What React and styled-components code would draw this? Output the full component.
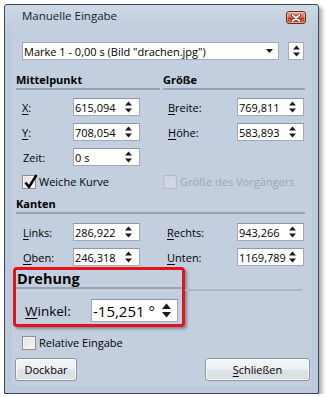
import React from "react";
import styled, { createGlobalStyle } from "styled-components";

const COLORS = {
  page: "#ffffff",
  border: "#3a4859",
  frame: "#bccadb",
  titleTop: "#cfd9e6",
  client: "#c3cfde",
  rule: "#98a3b1",
  ruleFaint: "#adb7c4",
  fieldBorder: "#a2aab5",
  text: "#000000",
  disabled: "#9ba6b3",
  red: "#e3131b",
};

const FONT = `"Segoe UI", "Open Sans", "Noto Sans", sans-serif`;

const GlobalStyle = createGlobalStyle`
  html, body {
    margin: 0;
    padding: 0;
    background: ${COLORS.page};
  }
  body {
    font-family: ${FONT};
    font-size: 11px;
    color: ${COLORS.text};
  }
  * { box-sizing: border-box; }
`;

const Window = styled.div`
  margin: 4px 0 0 4px;
  width: 315px;
  height: 390px;
  border: 1px solid ${COLORS.border};
  border-radius: 3px 3px 0 0;
  background: linear-gradient(${COLORS.titleTop} 0px, ${COLORS.frame} 28px, ${COLORS.frame} 100%);
  box-shadow: 3px 3px 4px rgba(0, 0, 0, 0.35);
  display: flex;
  flex-direction: column;
`;

const TitleBar = styled.div`
  height: 23px;
  display: flex;
  justify-content: space-between;
  align-items: flex-start;
  padding: 0 12px 0 17px;
`;

const Title = styled.span`
  font-size: 11.5px;
  line-height: 21px;
  color: #0f1e33;
`;

const CloseBox = styled.div`
  margin-top: 6px;
  width: 20px;
  height: 13px;
  border: 1px solid #6a2c24;
  border-radius: 3px;
  background: linear-gradient(#e9a596 0%, #d9715e 45%, #c2412d 55%, #d5664e 100%);
  box-shadow: inset 0 0 0 1px rgba(255, 255, 255, 0.35);
  display: flex;
  align-items: center;
  justify-content: center;
`;

const Frame = styled.div`
  flex: 1;
  padding: 0 6px 7px 7px;
  display: flex;
`;

const Client = styled.div`
  width: 300px;
  height: 358px;
  background: ${COLORS.client};
  padding: 14px 7px 5px 4px;
  display: flex;
  flex-direction: column;
`;

const TopRow = styled.div`
  display: flex;
  gap: 9px;
  margin-left: 6px;
  margin-right: -6px;
`;

const Combo = styled.div`
  width: 257px;
  height: 18px;
  background: #fff;
  border: 1px solid ${COLORS.fieldBorder};
  display: flex;
  align-items: center;
  justify-content: space-between;
  padding: 0 5px 0 1px;
  font-size: 11px;
  white-space: nowrap;
`;

const SpinBox = styled.div`
  width: 16px;
  height: 18px;
  background: #fff;
  border: 1px solid ${COLORS.fieldBorder};
  display: flex;
  align-items: center;
  justify-content: center;
`;

const TwoCol = styled.div`
  margin-top: 12px;
  display: grid;
  grid-template-columns: 144px 142px;
  column-gap: 3px;
  row-gap: 7px;
  align-items: center;
`;

const Header = styled.div`
  height: 18px;
  line-height: 16px;
  font-weight: 700;
  font-size: 11px;
  border-bottom: 2px solid ${COLORS.rule};
  margin-bottom: ${(p) => p.$after || 0}px;
  margin-top: ${(p) => p.$before || 0}px;
`;

const FieldRow = styled.div`
  display: flex;
  align-items: center;
  height: 18px;
  padding-left: ${(p) => p.$indent}px;
`;

const Label = styled.span`
  width: ${(p) => p.$width}px;
  font-size: ${(p) => p.$size || 11}px;
  u { text-decoration-thickness: 1px; text-underline-offset: 2px; }
`;

const Field = styled.div`
  width: ${(p) => p.$width || 67}px;
  height: ${(p) => p.$height || 18}px;
  background: #fff;
  border: 1px solid ${COLORS.fieldBorder};
  border-top-color: #8e97a3;
  display: flex;
  align-items: center;
  justify-content: space-between;
  padding: 0 ${(p) => p.$pad || 7}px 0 1px;
  font-size: ${(p) => p.$size || 11}px;
`;

const CheckRow = styled.label`
  display: flex;
  align-items: center;
  gap: 3px;
  height: 17px;
  padding-left: ${(p) => p.$indent || 0}px;
  margin-top: ${(p) => p.$top || 0}px;
  color: ${(p) => (p.$disabled ? COLORS.disabled : COLORS.text)};
  font-size: 11px;
`;

const Box = styled.span`
  position: relative;
  width: 14px;
  height: 14px;
  border: 1px solid ${(p) => (p.$disabled ? "#b3bdc9" : "#8e8f8f")};
  background: ${(p) =>
    p.$disabled
      ? "linear-gradient(135deg, #c9d3df, #d3dbe5)"
      : "linear-gradient(135deg, #dcdcdc, #fbfbfb)"};
  box-shadow: inset 0 0 0 1px ${(p) => (p.$disabled ? "#c8d1dc" : "#f4f4f4")};
  flex-shrink: 0;
`;

const CheckMark = styled.svg`
  position: absolute;
  left: 0px;
  top: -3px;
`;

const Rows = styled.div`
  display: grid;
  grid-template-columns: 144px 142px;
  column-gap: 3px;
  row-gap: 7px;
  margin-top: 9px;
`;

const RotationRow = styled.div`
  display: flex;
  margin-top: 1px;
  margin-left: -3px;
`;

const Callout = styled.div`
  width: 172px;
  height: 60px;
  border: 3px solid ${COLORS.red};
  border-radius: 4px;
  background: ${COLORS.client};
  box-shadow: 2px 2px 3px rgba(0, 0, 0, 0.35);
  display: flex;
  flex-direction: column;
`;

const CalloutHeader = styled.div`
  height: 19px;
  line-height: 17px;
  padding-left: 1px;
  font-weight: 700;
  font-size: 14.5px;
  border-bottom: 2px solid ${COLORS.rule};
`;

const CalloutBody = styled.div`
  margin-top: 10px;
  display: flex;
  align-items: center;
  padding-left: 9px;
`;

const RuleRest = styled.div`
  flex: 1;
  height: 24px;
  margin-right: 3px;
  border-bottom: 2px solid ${COLORS.ruleFaint};
`;

const Buttons = styled.div`
  margin: 7px -5px 0 -1px;
  display: flex;
  justify-content: space-between;
`;

const Button = styled.button`
  width: ${(p) => p.$width}px;
  height: 23px;
  font-family: ${FONT};
  font-size: 11px;
  color: #000;
  border: 1px solid #8a97a8;
  border-radius: 3px;
  background: linear-gradient(#f3f5f7 0%, #eceff3 48%, #dfe3e8 52%, #d8dde3 100%);
  box-shadow: inset 0 0 0 1px rgba(255, 255, 255, 0.8);
  padding: 0;
  u { text-decoration-thickness: 1px; text-underline-offset: 2px; }
`;

const Spin = ({ w = 7, h = 12 }) => {
  const mid = h / 2;
  return (
    <svg width={w} height={h} viewBox={`0 0 ${w} ${h}`}>
      <polygon points={`0,${mid - 1.5} ${w / 2},0.5 ${w},${mid - 1.5}`} fill="#1a1a1a" />
      <polygon points={`0,${mid + 1.5} ${w / 2},${h - 0.5} ${w},${mid + 1.5}`} fill="#1a1a1a" />
    </svg>
  );
};

const DownArrow = () => (
  <svg width="7" height="4" viewBox="0 0 7 4">
    <polygon points="0,0 7,0 3.5,4" fill="#1a1a1a" />
  </svg>
);

const CloseGlyph = () => (
  <svg width="10" height="8" viewBox="0 0 10 8">
    <path d="M1.5 1 L8.5 7 M8.5 1 L1.5 7" stroke="#5a1c14" strokeWidth="3.2" strokeLinecap="round" />
    <path d="M1.5 1 L8.5 7 M8.5 1 L1.5 7" stroke="#ffffff" strokeWidth="1.8" strokeLinecap="round" />
  </svg>
);

const Tick = () => (
  <CheckMark width="16" height="18" viewBox="0 0 16 18">
    <path d="M2.5 9.5 L6 14 L13.5 2" stroke="#000" strokeWidth="2.4" fill="none" strokeLinejoin="round" />
  </CheckMark>
);

const NumField = ({ value, label, labelWidth, indent }) => (
  <FieldRow $indent={indent}>
    <Label $width={labelWidth}>{label}</Label>
    <Field>
      <span>{value}</span>
      <Spin />
    </Field>
  </FieldRow>
);

const Check = ({ checked, disabled, indent, top, children }) => (
  <CheckRow $indent={indent} $disabled={disabled} $top={top}>
    <Box $disabled={disabled}>{checked && <Tick />}</Box>
    {children}
  </CheckRow>
);

export default function App() {
  return (
    <>
      <GlobalStyle />
      <Window>
        <TitleBar>
          <Title>Manuelle Eingabe</Title>
          <CloseBox>
            <CloseGlyph />
          </CloseBox>
        </TitleBar>
        <Frame>
          <Client>
            <TopRow>
              <Combo>
                <span>Marke 1 - 0,00 s (Bild "drachen.jpg")</span>
                <DownArrow />
              </Combo>
              <SpinBox>
                <Spin />
              </SpinBox>
            </TopRow>

            <TwoCol>
              <Header $after={1}>Mittelpunkt</Header>
              <Header $after={1}>Größe</Header>
              <NumField indent={6} labelWidth={51} label={<><u>X</u>:</>} value="615,094" />
              <NumField indent={5} labelWidth={69} label={<><u>B</u>reite:</>} value="769,811" />
              <NumField indent={6} labelWidth={51} label={<><u>Y</u>:</>} value="708,054" />
              <NumField indent={5} labelWidth={69} label={<><u>H</u>öhe:</>} value="583,893" />
              <NumField indent={7} labelWidth={50} label="Zeit:" value="0 s" />
              <div />
              <Check checked indent={6}>Weiche Kurve</Check>
              <Check disabled>Größe des Vorgängers</Check>
            </TwoCol>

            <Header $before={6}>Kanten</Header>
            <Rows>
              <NumField indent={7} labelWidth={50} label={<><u>L</u>inks:</>} value="286,922" />
              <NumField indent={4} labelWidth={70} label={<><u>R</u>echts:</>} value="943,266" />
              <NumField indent={7} labelWidth={50} label={<><u>O</u>ben:</>} value="246,318" />
              <NumField indent={4} labelWidth={70} label={<><u>U</u>nten:</>} value="1169,789" />
            </Rows>

            <RotationRow>
              <Callout>
                <CalloutHeader>Drehung</CalloutHeader>
                <CalloutBody>
                  <Label $width={66} $size={13.5}>
                    <u>W</u>inkel:
                  </Label>
                  <Field $width={87} $height={23} $size={15} $pad={6}>
                    <span>-15,251 °</span>
                    <Spin w={9} h={15} />
                  </Field>
                </CalloutBody>
              </Callout>
              <RuleRest />
            </RotationRow>

            <Check indent={6} top={7}>Relative Eingabe</Check>

            <Buttons>
              <Button $width={62}>Dockbar</Button>
              <Button $width={105}>
                <u>S</u>chließen
              </Button>
            </Buttons>
          </Client>
        </Frame>
      </Window>
    </>
  );
}
